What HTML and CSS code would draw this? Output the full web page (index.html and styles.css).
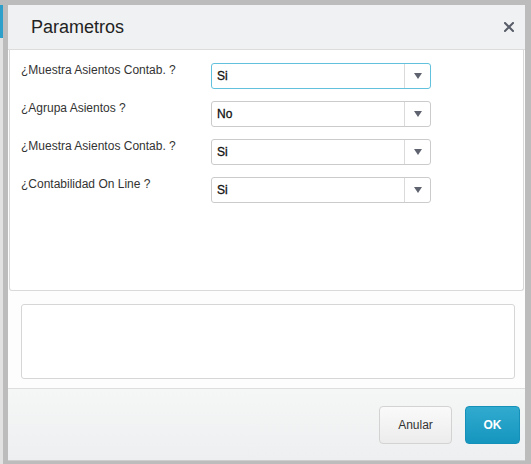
FILE: index.html
```html
<!DOCTYPE html>
<html lang="es">
<head>
    <meta charset="UTF-8">
    <meta name="viewport" content="width=device-width, initial-scale=1.0">
    <title>Parametros</title>
    <link rel="stylesheet" href="styles.css">
</head>
<body>
    <div class="page">
        <div class="side-strip"><div class="side-tab"></div></div>

        <div class="frame">
            <div class="dialog">
                <div class="dialog-header">
                    <h2>Parametros</h2>
                    <span class="close-btn" title="Cerrar">
                        <svg width="10" height="10" viewBox="0 0 10 10">
                            <path d="M1 1 L9 9 M9 1 L1 9" stroke="#585d69" stroke-width="2" stroke-linecap="square" fill="none"/>
                        </svg>
                    </span>
                </div>

                <div class="dialog-body">
                    <div class="row">
                        <label>¿Muestra Asientos Contab. ?</label>
                        <div class="combo focused">
                            <span class="combo-value">Si</span>
                            <span class="combo-arrow"></span>
                        </div>
                    </div>
                    <div class="row">
                        <label>¿Agrupa Asientos ?</label>
                        <div class="combo">
                            <span class="combo-value">No</span>
                            <span class="combo-arrow"></span>
                        </div>
                    </div>
                    <div class="row">
                        <label>¿Muestra Asientos Contab. ?</label>
                        <div class="combo">
                            <span class="combo-value">Si</span>
                            <span class="combo-arrow"></span>
                        </div>
                    </div>
                    <div class="row">
                        <label>¿Contabilidad On Line ?</label>
                        <div class="combo">
                            <span class="combo-value">Si</span>
                            <span class="combo-arrow"></span>
                        </div>
                    </div>
                </div>

                <div class="dialog-notes">
                    <div class="notes-box"></div>
                </div>

                <div class="dialog-footer">
                    <button class="btn btn-cancel">Anular</button>
                    <button class="btn btn-ok">OK</button>
                </div>
            </div>
        </div>
    </div>
</body>
</html>
```

FILE: styles.css
```css
/* Modal over a dimmed page */
html, body {
    margin: 0;
    height: 100%;
}

body {
    font-family: "Liberation Sans", Arial, sans-serif;
    background: #bcbcbc;
    color: #333;
    overflow: hidden;
}

.page {
    display: flex;
    height: 464px;
}

.side-strip {
    width: 3px;
    background: #e2e2e2;
    border-top: 5px solid #bcbcbc;
}

.side-tab {
    height: 33px;
    background: #2d9fc8;
}

.frame {
    flex: 1;
    padding: 5px 6px 3px 5px;
    display: flex;
}

.dialog {
    flex: 1;
    display: flex;
    flex-direction: column;
    background: #fdfdfd;
}

/* Header */
.dialog-header {
    height: 44px;
    display: flex;
    align-items: center;
    justify-content: space-between;
    padding: 0 11px 0 23px;
    background: #f0f1f2;
    border-bottom: 1px solid #dcdcdc;
}

.dialog-header h2 {
    margin: 0;
    font-size: 18px;
    font-weight: normal;
    color: #222;
}

.close-btn {
    display: flex;
    cursor: pointer;
}

/* Form area */
.dialog-body {
    height: 227px;
    margin: 0 1px;
    padding: 13px 0 0 11px;
    background: #fff;
    border: 1px solid #d9d9d9;
    border-top: none;
    border-radius: 0 0 3px 3px;
    display: flex;
    flex-direction: column;
    gap: 12px;
}

.row {
    display: flex;
    align-items: flex-start;
}

.row label {
    width: 190px;
    font-size: 12px;
    color: #333;
}

.combo {
    width: 218px;
    height: 24px;
    display: flex;
    border: 1px solid #cbcbcb;
    border-radius: 3px;
    background: #fff;
}

.combo.focused {
    border-color: #62c2dd;
}

.combo-value {
    flex: 1;
    padding-left: 5px;
    display: flex;
    align-items: center;
    font-size: 12px;
    color: #111;
    -webkit-text-stroke: 0.3px #111;
}

.combo-arrow {
    width: 25px;
    border-left: 1px solid #dadada;
    display: flex;
    align-items: center;
    justify-content: center;
}

.combo-arrow::after {
    content: "";
    border-left: 4px solid transparent;
    border-right: 4px solid transparent;
    border-top: 6px solid #5f6370;
}

/* Notes box */
.dialog-notes {
    height: 75px;
    padding: 13px 10px 9px 13px;
}

.notes-box {
    height: 73px;
    border: 1px solid #d6d6d6;
    border-radius: 3px;
    background: #fff;
}

/* Footer */
.dialog-footer {
    display: flex;
    justify-content: flex-end;
    gap: 13px;
    padding: 17px 5px 16px;
    background: linear-gradient(#f5f6f6, #eeeff0);
    border-top: 1px solid #dedede;
    border-bottom: 1px solid #cfcfcf;
}

.btn {
    height: 38px;
    border-radius: 4px;
    font-family: "Liberation Sans", Arial, sans-serif;
    font-size: 12px;
    cursor: pointer;
}

.btn-cancel {
    width: 73px;
    background: linear-gradient(#fafafa, #ececec);
    border: 1px solid #d3d3d3;
    color: #333;
}

.btn-ok {
    width: 55px;
    background: linear-gradient(#31aacf, #1596be);
    border: 1px solid #1590b8;
    color: #fff;
    font-weight: bold;
}
```
